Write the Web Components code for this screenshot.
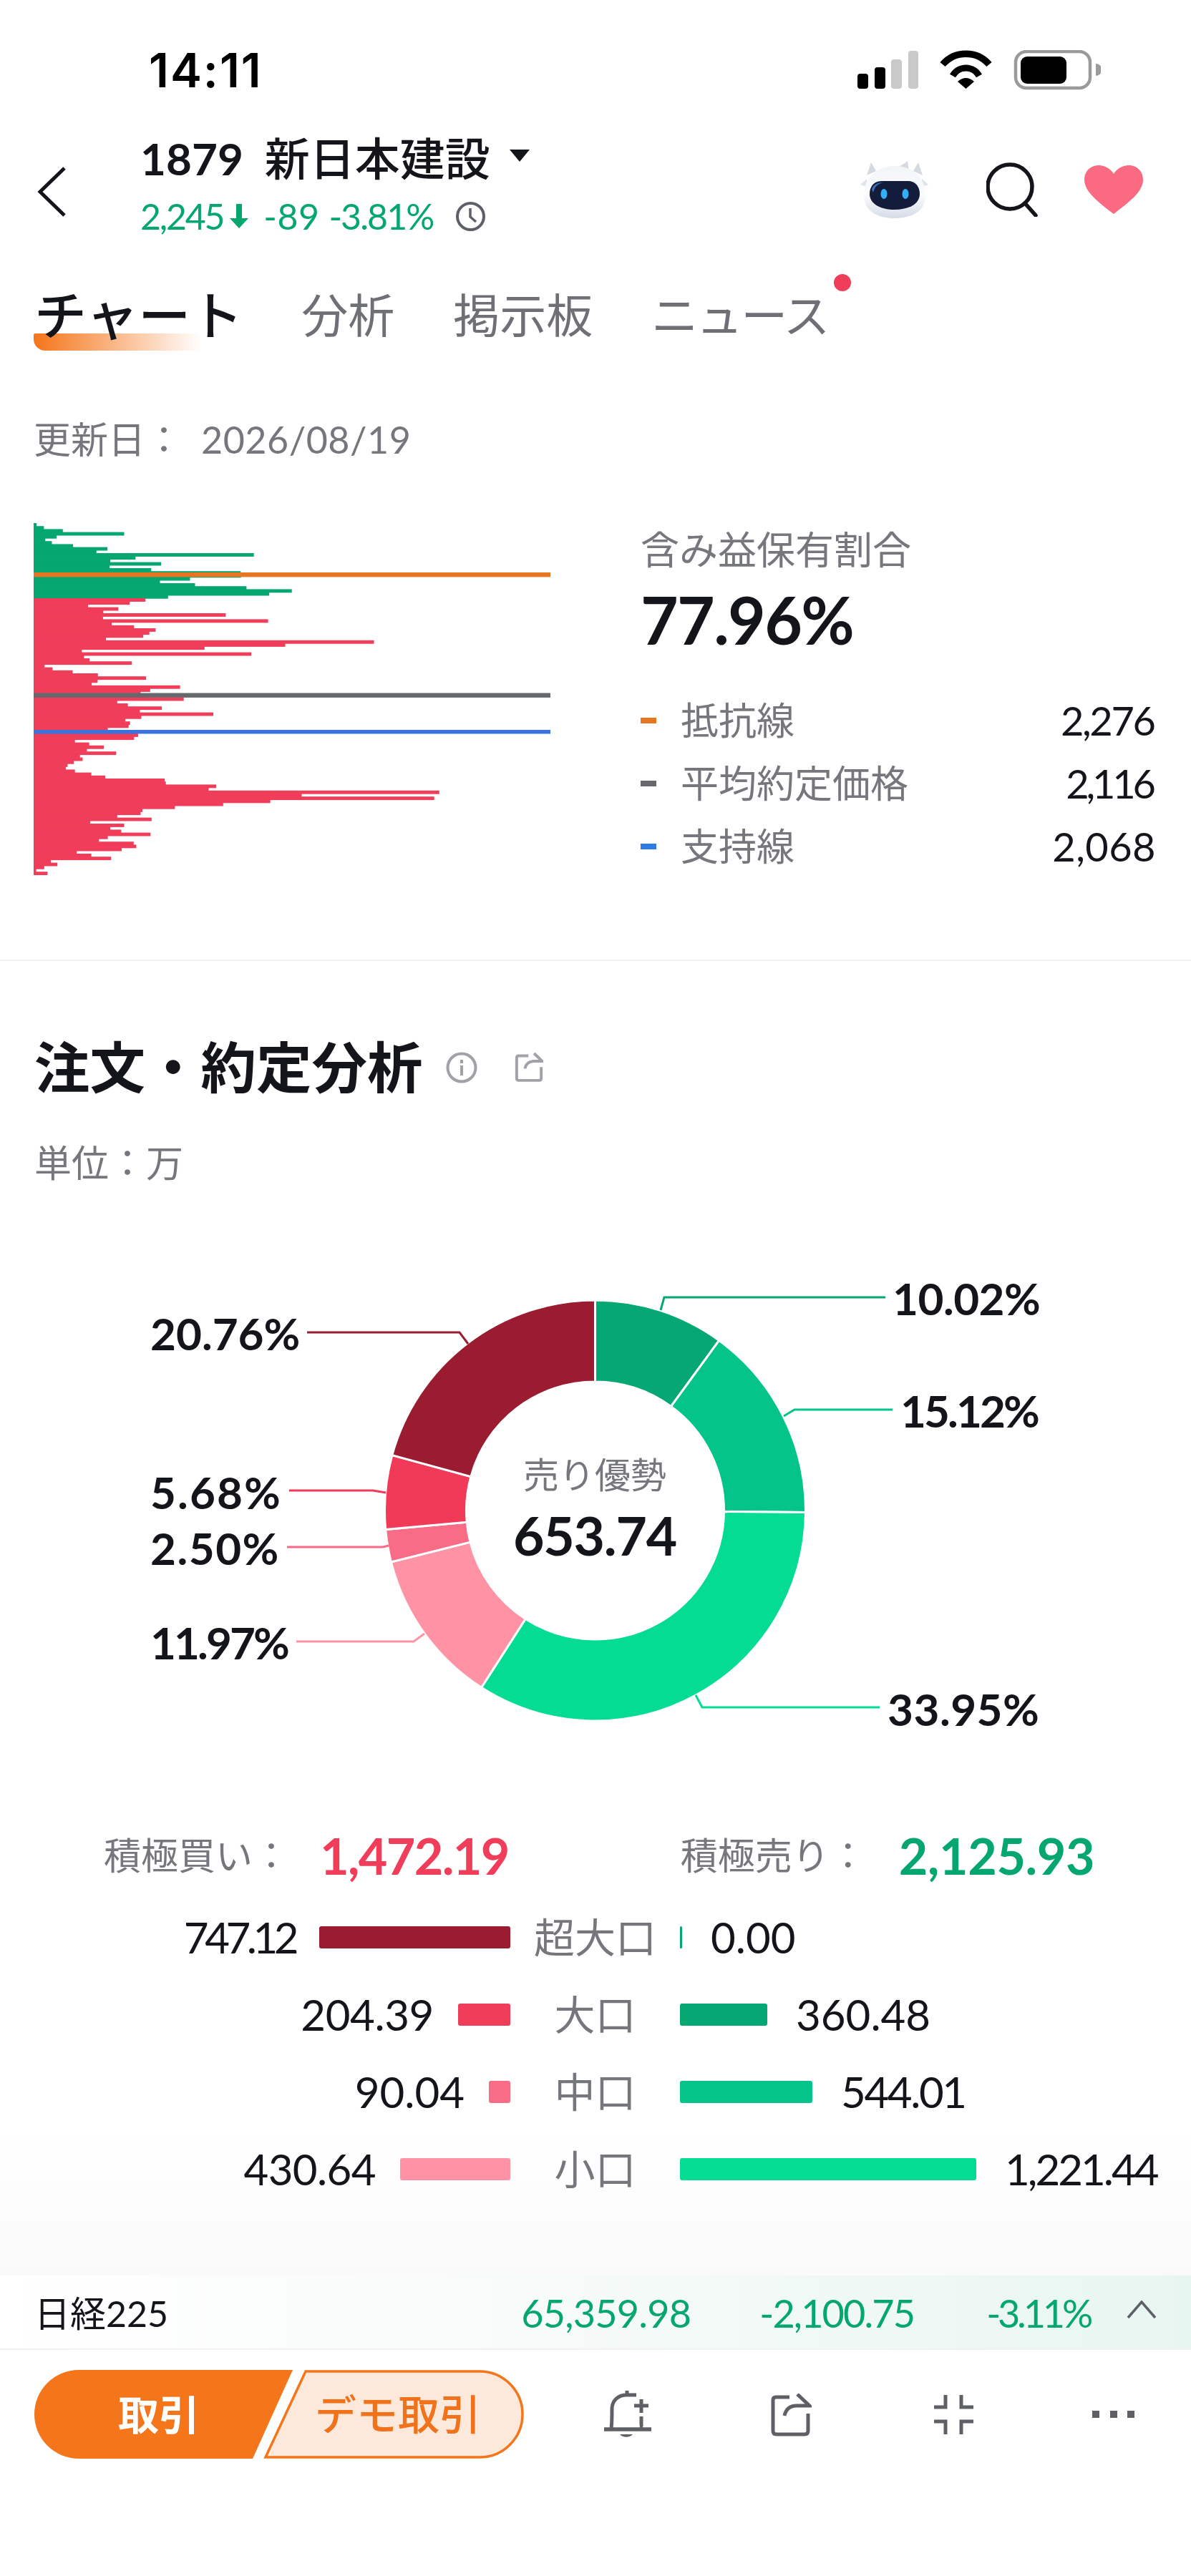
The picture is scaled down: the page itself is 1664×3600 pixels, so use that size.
<!DOCTYPE html>
<html lang="ja"><head><meta charset="utf-8"><title>1879</title>
<style>
html,body{margin:0;padding:0;background:#fff}
body{font-family:Lato,"Noto Sans CJK JP",sans-serif;color:#14151a}
</style></head><body>
<x-app></x-app>
<script>
const FONT='Lato,"Noto Sans CJK JP",sans-serif';
function def(name,html,init){
  customElements.define(name,class extends HTMLElement{
    constructor(){super();this.attachShadow({mode:'open'}).innerHTML=html;}
    connectedCallback(){if(init&&!this._i){this._i=1;init.call(this,this.shadowRoot);}}
  });
}
def('x-status',`<style>
:host{display:flex;height:148px;box-sizing:border-box;padding:48px 126px 0 208px;align-items:center;justify-content:space-between}
.t{font:600 66px Inter,sans-serif;letter-spacing:2px;color:#000}
svg{display:block}
</style><span class="t">14:11</span>
<svg width="340" height="56" viewBox="0 0 340 56">
<rect x="0" y="33" width="15" height="21" rx="4" fill="#000"/>
<rect x="24" y="24" width="15" height="30" rx="4" fill="#000"/>
<rect x="47" y="13" width="15" height="41" rx="4" fill="#c9c9c9"/>
<rect x="71" y="1" width="14" height="53" rx="4" fill="#c9c9c9"/>
<path d="M151.500 54 L140 44 Q151.500 34 163 44Z" fill="#000"/>
<path d="M133 36 A21 21 0 0 1 170 36" fill="none" stroke="#000" stroke-width="9"/>
<path d="M119 20 A43 43 0 0 1 184 20" fill="none" stroke="#000" stroke-width="9.500"/>
<rect x="221" y="2" width="104" height="51" rx="15" fill="none" stroke="#9a9a9a" stroke-width="4.500"/>
<rect x="228" y="9" width="64" height="38" rx="9" fill="#000"/>
<path d="M333 19a8.500 8.500 0 0 1 0 17z" fill="#9a9a9a"/>
</svg>`);
def('x-header',`<style>
:host{display:flex;height:192px;box-sizing:border-box;padding:40px 66px 0 48px;align-items:flex-start}
.back{margin:45px 0 0 3px;width:42px;height:70px;flex:none}
.mid{margin-left:103px;flex:1}
.a{display:flex;align-items:center;font:500 63px/66px ${FONT};height:66px;gap:0}
.code{font-weight:700;font-size:62px;margin-right:30px}
.name{font-weight:500}
.tri{margin-left:26px;margin-top:-6px}
.b{display:flex;align-items:center;font:400 50px/50px ${FONT};color:#06a670;margin-top:23px;height:50px}
.b svg{flex:none}
.r{display:flex;align-items:center;gap:0;margin-top:37px}
</style>
<svg class="back" viewBox="0 0 42 70"><path d="M39 2 L5 35 L39 68" fill="none" stroke="#14151a" stroke-width="5"/></svg>
<div class="mid"><div class="a"><span class="code">1879</span><span class="name">新日本建設</span>
<svg class="tri" width="30" height="18" viewBox="0 0 30 18"><path d="M1 0H29L15 17Z" fill="#14151a"/></svg></div>
<div class="b"><span style="letter-spacing:-2.200px">2,245</span><svg style="margin:0 21px 0 9px" width="26" height="34" viewBox="0 0 26 34"><path d="M9 0h8v20h9L13 34 0 20h9z" fill="#06a670"/></svg><span style="letter-spacing:.5px">-89</span><span style="margin-left:13px;letter-spacing:-1.900px">-3.81%</span>
<svg style="margin-left:30px" width="43" height="43" viewBox="0 0 43 43"><circle cx="21.500" cy="21.500" r="18.500" fill="none" stroke="#5d6068" stroke-width="4"/><path d="M21 10v12l8 7" fill="none" stroke="#5d6068" stroke-width="3.500"/></svg></div></div>
<div class="r">
<svg width="96" height="80" viewBox="0 0 96 80"><defs><linearGradient id="g" x1="0" y1="0" x2="0" y2="1"><stop offset="0" stop-color="#f2f4f8"/><stop offset=".55" stop-color="#fbfcfe"/><stop offset="1" stop-color="#d5dbe7"/></linearGradient></defs>
<path d="M15 2 L9 20 L22 14Z M81 2 L87 20 L74 14Z M40 12 Q56 9 66 0 L68 14Z" fill="#d4d9e2"/>
<path d="M0 33 L9 25 L9 36Z M95 33 L86 25 L86 36Z" fill="#dfe3ea"/>
<path d="M48 7C72 7 90 22 91 46C92 70 72 80 48 80C24 80 4 70 5 46C6 22 24 7 48 7Z" fill="url(#g)"/>
<path d="M30 28H66C77 28 83 36 83 46C83 60 68 68 48 68C28 68 13 60 13 46C13 36 19 28 30 28Z" fill="#141c3c"/>
<path d="M16 40C18 33 24 30 32 30C24 32 20 36 18 44Z" fill="#3f6fb5"/>
<ellipse cx="33" cy="46" rx="4.500" ry="7" fill="#2fb0f8"/><ellipse cx="63" cy="46" rx="4.500" ry="7" fill="#2fb0f8"/></svg>
<svg style="margin-left:80px" width="74" height="76" viewBox="0 0 74 76"><circle cx="33" cy="34" r="31" fill="none" stroke="#14151a" stroke-width="5.500"/><path d="M54 57 L69 74" stroke="#14151a" stroke-width="5.500" stroke-linecap="round" fill="none"/></svg>
<svg style="margin-left:62px" width="84" height="70" viewBox="0 0 84 70"><path d="M42 69C20 52 1 38 1 21C1 8 11 1 21 1C30 1 38 6 42 13C46 6 54 1 63 1C73 1 83 8 83 21C83 38 64 52 42 69Z" fill="#fa6a82"/></svg>
</div>`);
def('x-tab',`<style>
:host{display:block;position:relative;font:400 65px/80px ${FONT};color:#6f7075}
:host([on]){font-size:73px;font-weight:500;color:#14151a}
:host([dot]){letter-spacing:-2.500px}
.u{display:none;position:absolute;left:-1px;top:66px;width:234px;height:24px;border-radius:2px 0 0 16px;background:linear-gradient(90deg,#f5751a,rgba(245,117,26,0));z-index:0}
:host([on]) .u{display:block}
.s{position:relative;z-index:1}
.d{display:none;position:absolute;right:-32px;top:-17px;width:24px;height:24px;border-radius:50%;background:#f03d5a}
:host([dot]) .d{display:block}
</style><span class="u"></span><span class="s"><slot></slot></span><span class="d"></span>`);
def('x-tabs',`<style>
:host{display:flex;height:136px;box-sizing:border-box;padding:60px 0 0 48px;gap:82px;align-items:flex-start}
</style><slot></slot>`);
const H=[100,120,172,340,155,124,142,200,294,264,695,371,302,441,300,414,659,660,520,438,534,675,799,737,460,
398,355,241,324,283,618,282,734,306,367,426,409,392,290,1024,781,560,224,688,230,245,361,122,144,199,268,400,267,251,493,411,385,400,503,321,350,443,383,584,387,343,356,352,295,330,378,367,205,244,284,238,318,219,226,202,185,180,205,250,288,451,454,592,571,1203,826,1189,740,611,479,390,385,321,415,247,340,302,332,412,295,271,366,373,333,210,250,304,139,157,121,99,130];
def('x-hist',`<style>:host{display:block;width:722px;height:492px;flex:none}svg{display:block}</style><svg width="722" height="492" viewBox="0 0 722 492"></svg>`,function(r){
  const rh=4.2;let s='';
  H.forEach((v,i)=>{const w=(v-92)/1.96;s+=`<rect x="0" y="${(i*rh).toFixed(2)}" width="${w.toFixed(1)}" height="${rh+.7}" fill="${i<25?'#06a670':'#f03d5a'}"/>`;});
  s+='<rect x="0" y="69" width="722" height="6.400" fill="#e8751f"/><rect x="0" y="237.500" width="722" height="6.400" fill="#67686d"/><rect x="0" y="289" width="722" height="5.500" fill="#3a73dc"/>';
  r.querySelector('svg').innerHTML=s;
});
def('x-legend',`<style>
:host{display:flex;align-items:center;height:88px;font:400 53px/88px ${FONT};color:#76777c}
i{display:block;width:22px;height:8px;background:var(--c);margin-right:34px}
.v{margin-left:auto;color:#14151a;font-size:56px}
</style><i></i><span><slot></slot></span><span class="v"></span>`,function(r){r.querySelector('i').style.setProperty('--c',this.getAttribute('c'));const v=r.querySelector('.v'),ls=Number(this.getAttribute('ls'));v.textContent=this.getAttribute('v');v.style.letterSpacing=ls+'px';v.style.marginRight=Math.max(0,-ls)+'px';});
def('x-holding',`<style>
:host{display:flex;height:867px;box-sizing:border-box;border-bottom:2px solid #f1f1f3;padding:0 49px 0 47px;flex-direction:column}
.date{font:400 52px/70px ${FONT};color:#76777c;padding-top:103px;margin-bottom:82px;height:70px}
.date b{font-weight:400;margin-left:26px;letter-spacing:.5px}
.row{display:flex}
.info{margin-left:126px;flex:1;padding-top:3px}
.l{font:400 54px/70px ${FONT};color:#76777c}
.p{font:700 91px/110px ${FONT};margin:7px 0 42px;letter-spacing:-1.700px}
</style><div class="date">更新日：<b>2026/08/19</b></div>
<div class="row"><x-hist></x-hist><div class="info"><div class="l">含み益保有割合</div><div class="p">77.96%</div>
<x-legend c="#e8751f" v="2,276" ls="-2.400">抵抗線</x-legend><x-legend c="#67686d" v="2,116" ls="-4.200">平均約定価格</x-legend><x-legend c="#2f7be8" v="2,068" ls=".4">支持線</x-legend></div></div>`);
def('x-title',`<style>
:host{display:block;padding:106px 0 0 48px;height:407px;box-sizing:border-box}
.t{display:flex;align-items:center;font:700 77.500px/86px ${FONT}}
.t svg{flex:none}
.u{font:400 52px/70px ${FONT};color:#76777c;margin-top:55px}
</style><div class="t"><span>注文・約定分析</span>
<svg style="margin-left:32px" width="44" height="44" viewBox="0 0 44 44"><circle cx="22" cy="22" r="19.500" fill="none" stroke="#a0a2a8" stroke-width="4"/><rect x="20" y="19" width="4" height="14" fill="#a0a2a8"/><rect x="20" y="11" width="4" height="5" fill="#a0a2a8"/></svg>
<svg style="margin-left:52px" width="40" height="42" viewBox="0 0 56 58"><path d="M27 6H8Q4 6 4 10V50Q4 54 8 54H48Q52 54 52 50V28" fill="none" stroke="#a0a2a8" stroke-width="5.500"/><path d="M38 1L54 16.500H37C28 17 22 22 20 31" fill="none" stroke="#a0a2a8" stroke-width="5.500"/></svg>
</div><div class="u">単位：万</div>`);
const SEG=[[10.02,'#05a872'],[15.12,'#04c48a'],[33.95,'#04dc94'],[11.97,'#ff93a5'],[2.5,'#f86c85'],[5.68,'#f13a58'],[20.76,'#9b1c31']];
const LAB=[['10.02%',1247,1791,'#05a872','1237,1813 928,1813 923,1831',-.5],['15.12%',1258,1948,'#04c48a','1247,1970 1110,1970 1095,1979',-2.9],['33.95%',1240,2365,'#04dc94','1229,2386 981,2386 972,2369',.5],['20.76%',210,1840,'#9b1c31','429,1862 642,1862 654,1878',0],['5.68%',210,2062,'#f13a58','404,2083 521,2083 539,2086',2.1],['2.50%',210,2140,'#f86c85','401,2162 535,2162 543,2160',1.5],['11.97%',210,2272,'#ff93a5','414,2294 578,2294 593,2283',-2.9]];
const OY=1750;
def('x-donut',`<style>
:host{display:block;position:relative;height:740px}
svg{position:absolute;left:0;top:0}
.lab{position:absolute;font:700 62px/64px ${FONT};white-space:nowrap}
.c{position:absolute;left:631px;width:400px;text-align:center}
.c1{top:276px;font:400 50px/70px ${FONT};color:#76777c}
.c2{top:351px;font:700 75px/88px ${FONT};letter-spacing:-1.200px}
</style><svg width="1664" height="740" viewBox="0 ${OY} 1664 740"></svg>
<div class="c c1">売り優勢</div><div class="c c2">653.74</div>`,function(r){
  const cx=831.5,cy=2111,R=294,I=180;let a=0,s='';
  const P=(rad,t)=>{const th=t*Math.PI*2;return (cx+rad*Math.sin(th)).toFixed(2)+' '+(cy-rad*Math.cos(th)).toFixed(2);};
  SEG.forEach(([p,c])=>{const b=a+p/100,l=p>50?1:0;
    s+=`<path d="M${P(R,a)}A${R} ${R} 0 ${l} 1 ${P(R,b)}L${P(I,b)}A${I} ${I} 0 ${l} 0 ${P(I,a)}Z" fill="${c}" stroke="#fff" stroke-width="3"/>`;a=b;});
  LAB.forEach(l=>{s+=`<polyline points="${l[4]}" fill="none" stroke="${l[3]}" stroke-width="3"/>`;
    const d=document.createElement('div');d.className='lab';d.textContent=l[0];d.style.left=l[1]+'px';d.style.top=(l[2]-OY-9)+'px';d.style.letterSpacing=l[5]+'px';r.appendChild(d);});
  r.querySelector('svg').innerHTML=s;
});
def('x-sum',`<style>
:host{display:flex;height:100px;align-items:center;font:400 52px/70px ${FONT};color:#76777c;padding-left:145px}
b{font:700 70px/70px ${FONT}}
.a{color:#f03d5a;margin-left:42px;letter-spacing:-1.600px}.c{color:#06a670;margin-left:45px;letter-spacing:-.4px}
.s{margin-left:240px}
</style><span>積極買い：</span><b class="a">1,472.19</b><span class="s">積極売り：</span><b class="c">2,125.93</b>`);
def('x-row',`<style>
:host{display:grid;grid-template-columns:713px 237px 1fr;height:108px;align-items:center;font:400 60px/70px ${FONT}}
.l,.r{display:flex;align-items:center}
.l{justify-content:flex-end}
.n{text-align:center;color:#76777c;font-size:57px}
i{display:block;height:31px;border-radius:3px;flex:none}
.lb{margin-left:34px}.rb{margin-right:40px}
</style><div class="l"><span class="lv"></span><i class="lb"></i></div><div class="n"><slot></slot></div><div class="r"><i class="rb"></i><span class="rv"></span></div>`,function(r){
  const g=k=>this.getAttribute(k);
  const lv=r.querySelector('.lv'),rv=r.querySelector('.rv');
  lv.textContent=g('lv');rv.textContent=g('rv');
  lv.style.letterSpacing=(g('ll')||0)+'px';rv.style.letterSpacing=(g('rl')||0)+'px';
  const lb=r.querySelector('.lb'),rb=r.querySelector('.rb');
  lb.style.width=g('lw')+'px';lb.style.background=g('lc');rb.style.width=g('rw')+'px';rb.style.background=g('rc');
});
def('x-flows',`<style>:host{display:block;position:relative;z-index:1;padding-top:53px}.rows{padding-top:10px}</style><x-sum></x-sum><div class="rows">
<x-row lv="747.12" ll="-5.500" lw="267" lc="#9b1c31" rv="0.00" rw="3" rc="#05a872">超大口</x-row>
<x-row lv="204.39" ll="-.4" lw="73" lc="#f03d5a" rv="360.48" rw="122" rc="#05a872">大口</x-row>
<x-row lv="90.04" lw="30" lc="#f86c85" rv="544.01" rl="-2.400" rw="185" rc="#04c48a">中口</x-row>
<x-row lv="430.64" ll="-.6" lw="154" lc="#ff93a5" rv="1,221.44" rl="-3" rw="414" rc="#04dc94">小口</x-row></div>`);
def('x-fade',`<style>:host{display:block;position:absolute;left:0;right:0;top:2980px;height:200px;background:linear-gradient(180deg,rgba(250,250,250,0),#fafafa);pointer-events:none}</style>`);
def('x-index',`<style>
:host{display:flex;position:absolute;z-index:2;left:0;right:0;top:3180px;height:104px;box-sizing:border-box;border-bottom:2px solid #f1f1f3;align-items:center;background:linear-gradient(90deg,#fff 0%,#f7fbf9 45%,#e8f6f1 100%);font:400 54px/60px ${FONT};padding:4px 48px 0 48px;color:#06a670}
.n{color:#14151a;margin-right:auto;font-size:50px}
span{display:block}
svg{margin-left:51px;margin-top:-10px}
</style><span class="n">日経225</span><span style="letter-spacing:-.8px">65,359.98</span><span style="margin-left:96px;letter-spacing:-1.900px">-2,100.75</span><span style="margin-left:101px;letter-spacing:-4.200px">-3.11%</span>
<svg width="42" height="26" viewBox="0 0 42 26"><path d="M2 24L21 2L40 24" fill="none" stroke="#5d6068" stroke-width="3.500"/></svg>`);
def('x-bar',`<style>
:host{display:flex;position:absolute;z-index:2;left:0;right:0;top:3284px;height:316px;background:#fff;box-sizing:border-box;padding:28px 0 0 48px;align-items:flex-start}
.btn{position:relative;width:684px;height:124px;flex:none}
.btn svg{position:absolute;left:0;top:0}
.t{position:absolute;top:22px;font:700 57px/80px ${FONT};white-space:nowrap}
.icons{display:flex;align-items:flex-start}
svg{flex:none}
</style><div class="btn"><svg width="684" height="124" viewBox="0 0 684 124">
<path d="M62 0H361L305 124H62A62 62 0 0 1 62 0Z" fill="#f5751a"/>
<path d="M379 2H622A60 60 0 0 1 622 122H323Z" fill="#fde8dc" stroke="#f5751a" stroke-width="3.500"/></svg>
<span class="t" style="left:117px;color:#fff">取引</span><span class="t" style="left:392px;color:#f0731c;font-weight:500;font-size:58px">デモ取引</span></div>
<div class="icons">
<svg style="margin:29px 0 0 112px" width="66" height="68" viewBox="0 0 66 68"><path d="M0 54H66" stroke="#5f6066" stroke-width="5.500" fill="none"/><path d="M32 0V6M10 52C11 46 11 40 11 24C12 13 20 6 32 6H45M52 36V47C52 50 53 52 54 52" fill="none" stroke="#5f6066" stroke-width="5"/><path d="M22 61C26 66 36 66 40 61Z" fill="#5f6066"/><path d="M52 12V31M42 21H62" fill="none" stroke="#5f6066" stroke-width="5"/></svg>
<svg style="margin:33px 0 0 166px" width="58" height="60" viewBox="0 0 58 60"><path d="M27 5H8Q4 5 4 9V52Q4 57 9 57H48Q53 57 53 52V28" fill="none" stroke="#5f6066" stroke-width="5"/><path d="M38 1L55 17H37C28 17 22 22 20 31" fill="none" stroke="#5f6066" stroke-width="5"/></svg>
<svg style="margin:35px 0 0 171px" width="56" height="56" viewBox="0 0 56 56"><path d="M16 0V17H0M38 0V17H55M0 37H16V55M55 37H38V55" fill="none" stroke="#5f6066" stroke-width="5"/></svg>
<svg style="margin:57px 0 0 165px" width="60" height="10" viewBox="0 0 60 10"><rect width="10" height="10" fill="#5f6066"/><rect x="25" width="10" height="10" fill="#5f6066"/><rect x="49" width="10" height="10" fill="#5f6066"/></svg>
</div>`);
def('x-app',`<style>
:host{display:block;position:relative;width:1664px;height:3600px;overflow:hidden;background:#fff;font-family:${FONT}}
</style><x-fade></x-fade><x-status></x-status><x-header></x-header><x-tabs><x-tab on>チャート</x-tab><x-tab>分析</x-tab><x-tab>掲示板</x-tab><x-tab dot>ニュース</x-tab></x-tabs>
<x-holding></x-holding><x-title></x-title><x-donut></x-donut><x-flows></x-flows><x-index></x-index><x-bar></x-bar>`);
</script></body></html>
